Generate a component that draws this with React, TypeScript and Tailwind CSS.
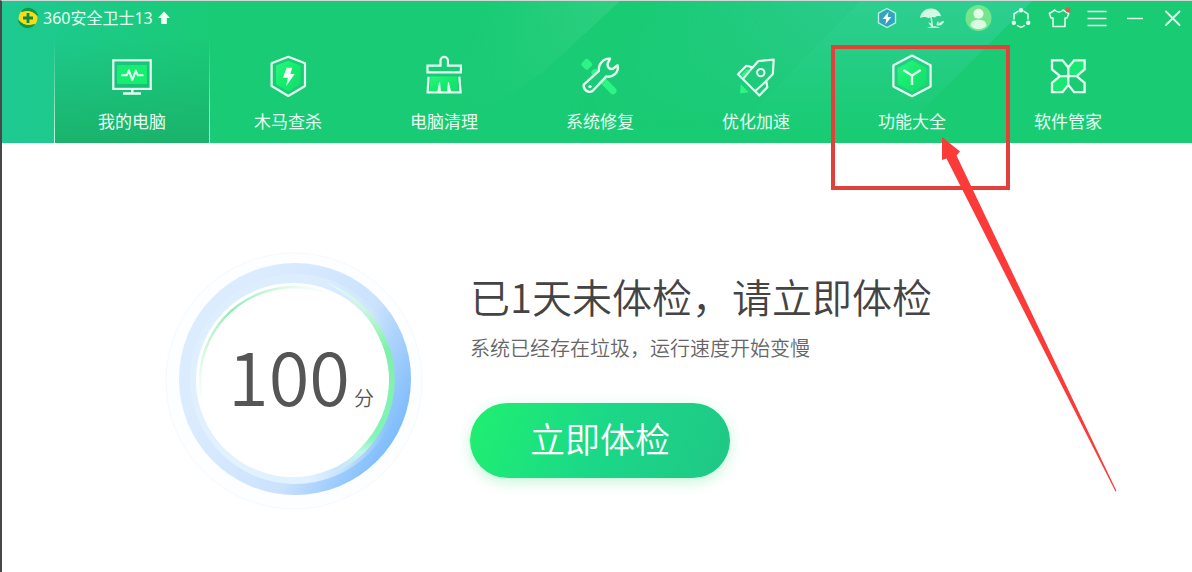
import type { ReactNode } from 'react';

const stroke = {
  fill: 'none',
  stroke: '#e6fff3',
  strokeWidth: 2,
  strokeLinejoin: 'round' as const,
  strokeLinecap: 'round' as const,
};

function NavGlyph({ children }: { children: ReactNode }) {
  return (
    <svg viewBox="0 0 44 44" className="size-11 overflow-visible" aria-hidden="true">
      {children}
    </svg>
  );
}

function ComputerIcon() {
  return (
    <NavGlyph>
      <rect x="7" y="10" width="30" height="19" fill="#16ee70" />
      <rect x="3.3" y="5.3" width="37.4" height="28.6" {...stroke} strokeWidth="2.2" strokeLinejoin="miter" />
      <path d="M22.3 34v4.5M13 38.5h18" {...stroke} strokeWidth="2.4" strokeLinecap="butt" />
      <path d="M12 20.3h4.7l2.2-5 3.4 9.5 3.5-9 2 4.5h4.9" {...stroke} />
    </NavGlyph>
  );
}

function ShieldIcon() {
  return (
    <NavGlyph>
      <path d="M22.3 5.7 34.6 10.5V29L22.3 36.5 10 29V10.5Z" fill="url(#glyphFill)" />
      <path d="M22.3 1.8 39 8.3V31L22.3 41 5.6 31V8.3Z" {...stroke} strokeWidth="2.2" />
      <path d="M20.6 12.7h5.6L24.4 19h4.3L20.2 31l1.6-8.3h-4.8Z" fill="#f1fff8" />
    </NavGlyph>
  );
}

function BrushIcon() {
  return (
    <NavGlyph>
      <path d="M8.5 21.5h26.5l1.5 15H7.5Z" fill="url(#glyphFill)" />
      <path d="M18.5 10.7V5.6a3.6 3.6 0 0 1 7.4 0v5.1h13v6.6H5.5v-6.6Z" {...stroke} strokeWidth="2.2" strokeLinejoin="miter" />
      <path d="M6.6 21.7 5.6 37.4h33l-1.3-15.7" {...stroke} strokeWidth="2.2" strokeLinejoin="miter" strokeLinecap="butt" />
      <path d="M15.6 37.4 17.6 27.4l.8 10ZM28.8 37.4 26.4 27.4l-.8 10Z" fill="#e6fff3" stroke="#e6fff3" />
    </NavGlyph>
  );
}

function WrenchIcon() {
  return (
    <NavGlyph>
      <rect x="4.3" y="4.8" width="9" height="9" rx="2" transform="rotate(45 8.8 9.3)" fill="#2df583" />
      <path d="M17 17.5 35 35.8" stroke="#2df583" strokeWidth="7" strokeLinecap="round" />
      <path
        d="M5.8 29.6 20.9 15.8C20.2 9.5 25 3.2 32 3.7L29.6 8.6C29 12 31.4 14.8 35 13.8L39.6 10.3C41.2 17 35.3 23 28.3 21.4L14.3 36.2A6 6 0 0 1 5.8 29.6Z"
        fill="#19ca76"
        stroke="#e6fff3"
        strokeWidth="2.4"
        strokeLinejoin="round"
      />
      <circle cx="12" cy="31.6" r="1.7" fill="#e6fff3" />
    </NavGlyph>
  );
}

function RocketIcon() {
  return (
    <NavGlyph>
      <path d="M6.7 29 6 38.5l8.5-1.2Z" fill="#2df583" />
      <path d="M7 20 12.5 14l4 1-6 8Z" fill="#2df583" />
      <path d="M39.7 4.7 24.4 6 18.6 12.4 12.4 10.8 4 19.2 25.3 40.5 33.3 32.2 32.2 26 38.8 19Z" {...stroke} strokeWidth="2.2" />
      <path d="M18.6 12.4 10 22.8M32.2 26 21.8 35.6" {...stroke} />
      <circle cx="26.8" cy="17.6" r="3.7" {...stroke} />
    </NavGlyph>
  );
}

function CubeIcon() {
  return (
    <NavGlyph>
      <path d="M22 5.5 36.5 13v15.7L22 37 7.5 28.7V13Z" fill="url(#glyphFill)" />
      <path d="M22 .5 40.6 10.3v21.2L22 41.3 3.4 31.5V10.3Z" {...stroke} strokeWidth="2.2" />
      <path d="M13.3 15 22 20.5 30.7 15M22 20.5V30" {...stroke} strokeWidth="2.4" strokeLinecap="butt" />
    </NavGlyph>
  );
}

function CloverIcon() {
  return (
    <NavGlyph>
      <path d="M38 5.3H28L22 12.5V21h8.5L38 14ZM6 37V28l7.5-7H22v8.5L16 37Z" fill="#18e870" />
      <path
        d="M6 5.3H16.5L22.3 12.5V21.2H14L6 14.5ZM38.6 5.3H28.1L22.3 12.5V21.2h8.3L38.6 14.5ZM6 37.1V27.9l8-6.7h8.3v8.7L16.5 37.1ZM38.6 37.1V27.9l-8-6.7h-8.3v8.7L28.1 37.1Z"
        {...stroke}
        strokeWidth="2.3"
        strokeLinejoin="miter"
      />
    </NavGlyph>
  );
}

const navItems = [
  { label: '我的电脑', icon: <ComputerIcon /> },
  { label: '木马查杀', icon: <ShieldIcon /> },
  { label: '电脑清理', icon: <BrushIcon /> },
  { label: '系统修复', icon: <WrenchIcon /> },
  { label: '优化加速', icon: <RocketIcon /> },
  { label: '功能大全', icon: <CubeIcon /> },
  { label: '软件管家', icon: <CloverIcon /> },
];

function SmallGlyph({ children }: { children: ReactNode }) {
  return (
    <svg viewBox="0 0 28 28" className="size-7" aria-hidden="true">
      {children}
    </svg>
  );
}

const accountTools = [
  {
    label: '加速',
    icon: (
      <SmallGlyph>
        <path d="M14 4.5 22.5 9.2v9.6L14 23.5 5.5 18.8V9.2Z" fill="#35a3bd" stroke="#b5f0e6" strokeWidth="1.4" />
        <path d="M15.5 8 9.6 15h3.7l-.9 5.2L18.4 13h-3.7Z" fill="#fff" />
      </SmallGlyph>
    ),
  },
  {
    label: '保护',
    icon: (
      <SmallGlyph>
        <path d="M1 14C2 7.5 7 4.300 12.500 4.500c5 .3 9 3.800 9.500 8-2.500-.8-4.500-.3-6 1-2-1-4.500-.8-6.500.8-2.300-1.600-5.500-2-8.500-.3Z" fill="#d3f9e3" />
        <path d="M12 12.500 13.500 23.500" stroke="#d3f9e3" strokeWidth="1.500" />
        <path d="M8 23.800c4-2 9-2 13 0ZM13.500 22c-1-3-3-4-4-3.500.5 2 2 3.500 4 3.500ZM18 22c-1-2 0-4 1-5 1.500 2 .5 4-1 5ZM19 21.500c1-3 3.500-4.500 6-4.500-.5 3-3 4.800-6 4.500Z" fill="#d3f9e3" />
      </SmallGlyph>
    ),
  },
  {
    label: '账号',
    icon: (
      <SmallGlyph>
        <circle cx="13.5" cy="14" r="13" fill="#74e58d" />
        <path d="M5.5 21.8c0-4 3-6 8-6s8 2 8 6c-2 2.3-5 3.4-8 3.4s-6-1.1-8-3.4Z" fill="#d9fbe0" />
        <circle cx="13.5" cy="9.8" r="5" fill="#e2fce8" />
      </SmallGlyph>
    ),
  },
];

const windowTools = [
  {
    label: '分享',
    icon: (
      <SmallGlyph>
        <path d="M11 7.4 7 10v5M10.5 21.6 14 23.3l3.5-1.7M21 15v-5l-4-2.6" {...stroke} strokeWidth="1.5" />
        <circle cx="14" cy="6.2" r="2.2" fill="#e6fff3" />
        <circle cx="6.8" cy="18.7" r="2.2" fill="#e6fff3" />
        <circle cx="21.2" cy="18.7" r="2.2" fill="#e6fff3" />
      </SmallGlyph>
    ),
  },
  {
    label: '换肤',
    icon: (
      <SmallGlyph>
        <path d="M10 6 4.3 9.5 6 14h2v8.500h12V14h2l1.700-4.500L18 6c-1.500 2.800-6.500 2.800-8 0Z" {...stroke} strokeWidth="1.5" />
        <circle cx="23" cy="6" r="2.5" fill="#e2574f" />
      </SmallGlyph>
    ),
  },
  {
    label: '菜单',
    icon: (
      <SmallGlyph>
        <path d="M4.5 7.5h19M4.5 14.5h19M4.5 21.5h19" {...stroke} strokeWidth="1.4" strokeLinecap="butt" />
      </SmallGlyph>
    ),
  },
  {
    label: '最小化',
    icon: (
      <SmallGlyph>
        <path d="M6 14.5h16" {...stroke} strokeWidth="1.4" strokeLinecap="butt" />
      </SmallGlyph>
    ),
  },
  {
    label: '关闭',
    icon: (
      <SmallGlyph>
        <path d="M7 7.5 20.5 21M20.5 7.5 7 21" {...stroke} strokeWidth="1.8" />
      </SmallGlyph>
    ),
  },
];

function HeaderBackdrop() {
  return (
    <svg viewBox="0 0 1190 142" preserveAspectRatio="none" className="absolute inset-0 -z-10 size-full" aria-hidden="true">
      <defs>
        <linearGradient id="glyphFill" x1="0" x2="1" y1="0" y2="1">
          <stop offset="0" stopColor="#2cf584" />
          <stop offset="0.5" stopColor="#14ec6b" />
          <stop offset="1" stopColor="#18d873" />
        </linearGradient>
        <linearGradient id="base" x1="0" x2="1" y1="0" y2="0">
          <stop offset="0" stopColor="#1fc993" />
          <stop offset="0.18" stopColor="#19cb75" />
          <stop offset="1" stopColor="#19cb72" />
        </linearGradient>
        <linearGradient id="beamLeft" gradientUnits="userSpaceOnUse" x1="480" y1="0" x2="585" y2="60">
          <stop offset="0" stopColor="#34d184" stopOpacity="0" />
          <stop offset="1" stopColor="#34d184" stopOpacity="0.8" />
        </linearGradient>
        <linearGradient id="beamMid" gradientUnits="userSpaceOnUse" x1="640" y1="0" x2="800" y2="110">
          <stop offset="0" stopColor="#2fcb92" stopOpacity="0" />
          <stop offset="1" stopColor="#2fcb92" stopOpacity="0.9" />
        </linearGradient>
        <linearGradient id="beamRight" gradientUnits="userSpaceOnUse" x1="860" y1="0" x2="860" y2="130">
          <stop offset="0" stopColor="#2dcf90" />
          <stop offset="1" stopColor="#2dcf90" stopOpacity="0" />
        </linearGradient>
        <linearGradient id="fade" x1="0" x2="0" y1="0" y2="1">
          <stop offset="0" stopColor="#fff" />
          <stop offset="0.9" stopColor="#000" />
        </linearGradient>
        <mask id="fadeDown">
          <rect width="1190" height="142" fill="url(#fade)" />
        </mask>
      </defs>
      <rect width="1190" height="142" fill="url(#base)" />
      <g mask="url(#fadeDown)">
        <path d="M440 0H618L540 72 440 142Z" fill="url(#beamLeft)" />
        <path d="M618 0H858L720 142H480L540 72Z" fill="url(#beamMid)" />
      </g>
      <path d="M858 0H1030L888 142H720Z" fill="url(#beamRight)" />
    </svg>
  );
}

function BrandMark() {
  return (
    <svg viewBox="0 0 22 22" className="size-[22px]" aria-hidden="true">
      <circle cx="11" cy="11" r="9.5" fill="#f6dd1b" />
      <path d="M4.500 4.500C10-1 18 1.500 20.500 8.500 17 4 11 2.500 4.500 4.500ZM17.500 17.500C12 23 4 20.500 1.500 13.500 5 18 11 19.500 17.500 17.500Z" fill="#0d9a43" stroke="#0d9a43" strokeWidth="1.2" />
      <path d="M11 6v10M6 11h10" stroke="#128a3c" strokeWidth="2.8" />
    </svg>
  );
}

function Header() {
  return (
    <header className="relative isolate text-[#e6fff3]">
      <HeaderBackdrop />
      <div className="flex h-[37px] items-center justify-between pl-[15px]">
        <div className="flex h-[34px] items-center gap-1 self-start">
          <BrandMark />
          <span className="text-base leading-5">360安全卫士13</span>
          <button type="button" aria-label="升级">
            <svg viewBox="0 0 14 14" className="size-3.5" aria-hidden="true">
              <path d="M7 .5 13 7H9.800V13H4.200V7H1Z" fill="#f1fff8" />
            </svg>
          </button>
        </div>
        <div className="flex h-[34px] items-center self-start">
          {accountTools.map((tool) => (
            <button key={tool.label} type="button" aria-label={tool.label} className="flex w-[46px] justify-center">
              {tool.icon}
            </button>
          ))}
          {windowTools.map((tool) => (
            <button key={tool.label} type="button" aria-label={tool.label} className="flex w-[38px] justify-center">
              {tool.icon}
            </button>
          ))}
        </div>
      </div>
      <nav className="flex pl-[52px]">
        {navItems.map((item, index) => (
          <button
            key={item.label}
            type="button"
            className={
              index === 0
                ? 'relative flex w-39 flex-col items-center gap-[11px] bg-linear-to-b from-transparent to-[#1ab36c] pt-[17px] pb-[9px]'
                : 'flex w-39 flex-col items-center gap-[11px] pt-[17px] pb-[9px]'
            }
          >
            {index === 0 && (
              <>
                <span className="absolute inset-y-0 left-0 w-px bg-linear-to-b from-transparent to-[#c9f7e2]" />
                <span className="absolute inset-y-0 right-0 w-px bg-linear-to-b from-transparent to-[#c9f7e2]" />
              </>
            )}
            {item.icon}
            <span className="text-[17px] leading-6">{item.label}</span>
          </button>
        ))}
      </nav>
    </header>
  );
}

function ScoreGauge() {
  return (
    <div className="relative size-[260px] shrink-0">
      <svg viewBox="0 0 260 260" className="size-full" aria-hidden="true">
        <defs>
          <linearGradient id="ring" gradientUnits="userSpaceOnUse" x1="60" y1="90" x2="235" y2="180">
            <stop offset="0" stopColor="#dcecff" />
            <stop offset="0.6" stopColor="#cbe2fd" />
            <stop offset="1" stopColor="#7dbcfc" />
          </linearGradient>
          <linearGradient id="innerRing" gradientUnits="userSpaceOnUse" x1="0" y1="20" x2="0" y2="240">
            <stop offset="0" stopColor="#dcedfd" />
            <stop offset="1" stopColor="#e2f2fd" />
          </linearGradient>
          <linearGradient id="innerFade" gradientUnits="userSpaceOnUse" x1="140" y1="0" x2="225" y2="0">
            <stop offset="0" stopColor="#fff" />
            <stop offset="1" stopColor="#000" />
          </linearGradient>
          <mask id="innerMask">
            <rect width="260" height="260" fill="url(#innerFade)" />
          </mask>
          <linearGradient id="crescent" gradientUnits="userSpaceOnUse" x1="0" y1="30" x2="0" y2="226">
            <stop offset="0" stopColor="#e6f8f4" />
            <stop offset="0.15" stopColor="#ccf5e2" />
            <stop offset="0.35" stopColor="#7ff0ab" />
            <stop offset="0.8" stopColor="#83f3b6" />
            <stop offset="0.88" stopColor="#c4f6e6" />
            <stop offset="1" stopColor="#d6f5f2" stopOpacity="0" />
          </linearGradient>
          <linearGradient id="thinArc" gradientUnits="userSpaceOnUse" x1="40" y1="160" x2="170" y2="50">
            <stop offset="0" stopColor="#a5f0c5" stopOpacity="0" />
            <stop offset="0.5" stopColor="#8eecb4" />
            <stop offset="1" stopColor="#a5f0c5" stopOpacity="0" />
          </linearGradient>
        </defs>
        <circle cx="129" cy="131" r="128" fill="#fdfeff" stroke="#f5f9fd" />
        <circle cx="130" cy="129" r="116" fill="url(#ring)" />
        <circle cx="130" cy="129" r="105" fill="url(#innerRing)" mask="url(#innerMask)" />
        <circle cx="128" cy="130" r="97" fill="#fff" />
        <path d="M160 32A103 103 0 0 1 160 227Q215 195 224 130 220 65 160 32Z" fill="url(#crescent)" />
        <circle cx="129" cy="130" r="95" fill="#fff" />
        <path d="M37 150A94 94 0 0 1 175 49" fill="none" stroke="url(#thinArc)" strokeWidth="2.4" />
      </svg>
      <div className="absolute inset-0 flex items-baseline justify-center gap-1 pt-[75px] pl-3 text-[#555]">
        <span className="font-['Noto_Sans_CJK_SC',sans-serif] text-[74px] leading-[98px] font-[350]">100</span>
        <span className="text-[20px] font-[350]">分</span>
      </div>
    </div>
  );
}

function Annotation() {
  return (
    <div className="pointer-events-none absolute inset-0" aria-hidden="true">
      <div className="absolute top-[44px] left-[829px] h-[145px] w-[179px] border-4 border-[#e2403b]" />
      <svg viewBox="0 0 176 356" className="absolute top-[136px] left-[939px] h-[356px] w-[176px]">
        <path d="M1 0 19 14.5 15.5 18.5 175.500 354 174.500 354.500 5.5 21.5 1 23Z" fill="#fb3a3a" />
      </svg>
    </div>
  );
}

export default function App() {
  return (
    <div className="relative min-h-screen overflow-hidden border-t border-l-2 border-t-[#d3d9d6] border-l-[#48484a] bg-white font-['Noto_Sans','Noto_Sans_CJK_SC',sans-serif]">
      <Header />
      <main className="flex items-start gap-[45px] pt-[107px] pl-[163px]">
        <ScoreGauge />
        <section className="pt-[18px] font-['Noto_Sans_CJK_SC',sans-serif]">
          <h1 className="text-[40px] leading-14 font-[350] text-[#444]">已1天未体检，请立即体检</h1>
          <p className="mt-[10px] text-[20px] leading-7 font-[350] text-[#666]">系统已经存在垃圾，运行速度开始变慢</p>
          <button
            type="button"
            className="mt-[41px] h-[75px] w-[260px] rounded-full bg-linear-[110deg] from-[#1ff070] via-[#1bd888] to-[#1fc786] pb-1 text-[35px] font-[350] text-white shadow-[0_4px_14px_rgba(60,225,130,0.3)]"
          >
            立即体检
          </button>
        </section>
      </main>
      <Annotation />
    </div>
  );
}
